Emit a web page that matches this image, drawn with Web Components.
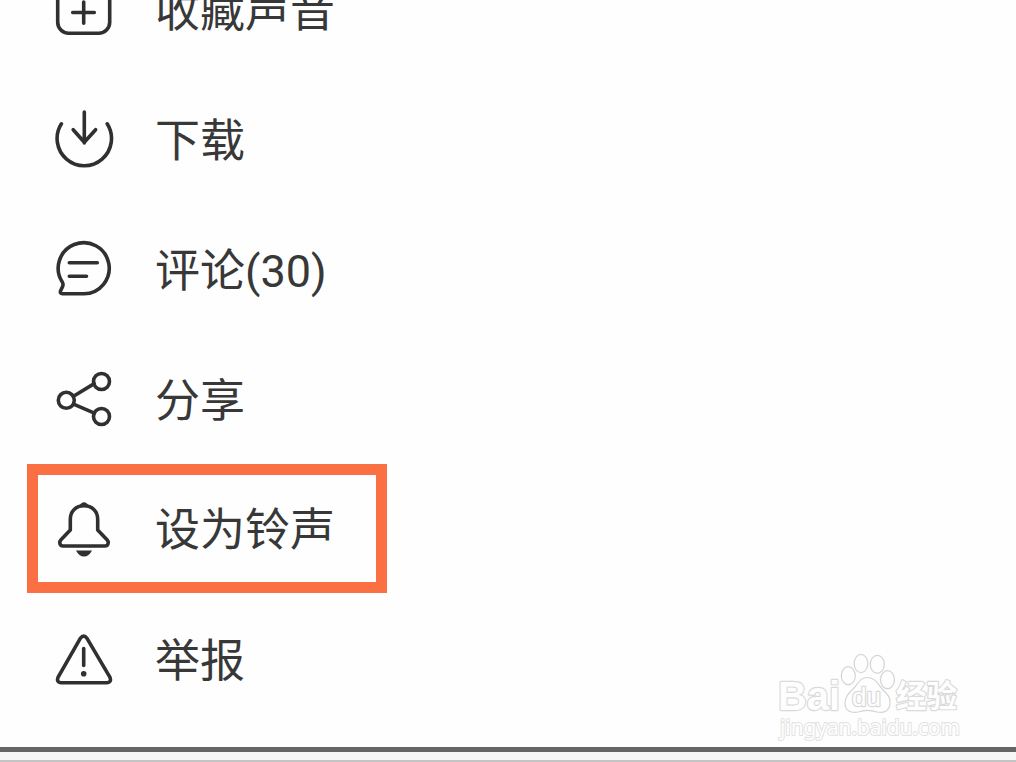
<!DOCTYPE html>
<html lang="zh-CN">
<head>
<meta charset="utf-8">
<title>声音菜单</title>
<style>
  body {
    margin: 0;
    background: #fefefe;
    overflow: hidden;
  }
</style>
</head>
<body>
<sound-menu>
  <menu-item icon="collect">收藏声音</menu-item>
  <menu-item icon="download">下载</menu-item>
  <menu-item icon="comment">评论(30)</menu-item>
  <menu-item icon="share">分享</menu-item>
  <menu-item icon="bell" marked>设为铃声</menu-item>
  <menu-item icon="report">举报</menu-item>
  <page-watermark slot="watermark"></page-watermark>
</sound-menu>

<script>
/**
 * Icon drawings, all on a 60 x 60 grid.
 */
const icons = {
  collect: `
    <rect x="3.7" y="3.5" width="52" height="50.7" rx="11"/>
    <path d="M18.7 33.5h21.6M29.7 23v21.2"/>`,
  download: `
    <path d="M7.4 14.8A27.2 27.2 0 1 0 53.2 14.8"/>
    <path d="M30.3 3v31M19.2 20.7l11.1 12.500 11.300-12.500"/>`,
  comment: `
    <path d="M30 54.700H8.4q-2.6 0-1.9-2.7l2.200-4.800q.8-2.2-.5-4.3A25.500 25.500 0 1 1 30 54.700z"/>
    <path d="M15.3 23.7h28M15.3 37.3h17.2"/>`,
  share: `
    <circle cx="12.3" cy="31.3" r="8"/>
    <circle cx="47.5" cy="12.5" r="8"/>
    <circle cx="47.5" cy="47.5" r="8"/>
    <path d="M19.5 27.2l20.7-12.6M19.5 35.2l20.900 9"/>`,
  bell: `
    <path d="M16.300 20.500C16.300 12 22 6.800 30 6.800S43.700 12 43.700 20.500V31L53 40.700C55.300 43.500 54 47 51 47H9C6 47 4.700 43.500 7 40.700L16.300 31z"/>
    <path class="solid" d="M24.500 7.500Q27.500 3.200 30 3.200T35.500 7.500zM22 51.500H38Q35 57.500 30 57.500T22 51.500z"/>`,
  report: `
    <path d="M26.300 9.300Q29.700 5 33 9.300L56 48.300Q57.800 53.400 53 53.700H7Q2.200 53.400 4 48.300z"/>
    <path d="M29.700 19.500v17"/>
    <circle class="solid" cx="29.700" cy="44.700" r="2.800"/>`
}

const itemTemplate = document.createElement('template')
itemTemplate.innerHTML = `
  <style>
    :host {
      display: flex;
      align-items: center;
      height: 130px;
      box-sizing: border-box;
      padding-left: 54px;
    }

    :host([marked]) {
      width: 360px;
      height: 129px;
      margin: 0 0 1px 27px;
      padding-left: 16px;
      border: 11px solid #fb7043;
    }

    svg {
      flex: none;
      width: 60px;
      height: 60px;
      margin-right: 41px;
      fill: none;
      stroke: #303030;
      stroke-width: 3.6;
      stroke-linecap: round;
      stroke-linejoin: round;
    }

    .solid {
      fill: #303030;
      stroke: none;
    }

    .label {
      padding-top: 5px;
      line-height: 60px;
      white-space: nowrap;
    }
  </style>
  <svg viewBox="0 0 60 60"></svg>
  <span class="label"><slot></slot></span>
`

/**
 * One row of the menu: an icon and its label.
 */
customElements.define('menu-item',
  class extends HTMLElement {
    constructor () {
      super()

      this.attachShadow({ mode: 'open' })
        .appendChild(itemTemplate.content.cloneNode(true))
    }

    connectedCallback () {
      this.shadowRoot.querySelector('svg').innerHTML = icons[this.getAttribute('icon')] || ''
    }
  }
)

const watermarkTemplate = document.createElement('template')
watermarkTemplate.innerHTML = `
  <style>
    :host {
      display: block;
      width: 190px;
      height: 94px;
    }

    svg {
      display: block;
      fill: #fefefe;
      stroke: #dadada;
      stroke-width: 2.4;
      stroke-linejoin: round;
    }

    text {
      font-family: "Liberation Sans", "Noto Sans CJK SC", sans-serif;
      paint-order: stroke;
    }

    .bold {
      font-weight: 700;
    }

    .url {
      font-family: "Noto Sans", sans-serif;
      stroke: #e2e2e2;
      stroke-width: 2;
    }

    .paw {
      stroke: #d4d4d4;
      stroke-width: 1.2;
    }
  </style>
  <svg width="190" height="94" viewBox="0 0 190 94">
    <text class="bold" x="3" y="60" font-size="41" textLength="62" lengthAdjust="spacingAndGlyphs">Bai</text>
    <g class="paw">
      <ellipse cx="73.300" cy="25.700" rx="7" ry="9"/>
      <ellipse cx="86" cy="13.500" rx="6.800" ry="9.200"/>
      <ellipse cx="102.300" cy="14.300" rx="7" ry="9"/>
      <ellipse cx="112.500" cy="29.700" rx="7" ry="9"/>
      <path d="M92.500 27.500C100 27.500 103 34 108 40C113 44 116 48 115 54C114 61 109 63.500 102 62C96 60 89 60 83 62C76 63.500 70 61 70 53C70 47 74 43 78 39C83 34 85 27.500 92.500 27.500z"/>
    </g>
    <text x="77" y="56" font-size="25" textLength="29" lengthAdjust="spacingAndGlyphs">du</text>
    <text class="bold" x="121" y="57" font-size="30.500" textLength="61" lengthAdjust="spacingAndGlyphs">经验</text>
    <text class="url" x="5" y="84.500" font-size="21" textLength="180" lengthAdjust="spacingAndGlyphs">jingyan.baidu.com</text>
  </svg>
`

/**
 * The site mark in the corner of the page.
 */
customElements.define('page-watermark',
  class extends HTMLElement {
    constructor () {
      super()

      this.attachShadow({ mode: 'open' })
        .appendChild(watermarkTemplate.content.cloneNode(true))
    }
  }
)

const menuTemplate = document.createElement('template')
menuTemplate.innerHTML = `
  <style>
    :host {
      display: flex;
      flex-direction: column;
      position: relative;
      height: 762px;
      overflow: hidden;
      color: #383838;
      font: 400 45px Roboto, "Noto Sans CJK SC", sans-serif;
    }

    .list {
      flex: 1;
      min-height: 0;
      margin-top: -56px;
    }

    .edge {
      height: 8px;
      border-top: 5px solid #666;
      border-bottom: 2px solid #c4c4c4;
      background: #f7f7f7;
    }

    ::slotted([slot="watermark"]) {
      position: absolute;
      right: 51px;
      bottom: 18px;
    }
  </style>
  <div class="list"><slot></slot></div>
  <div class="edge"></div>
  <slot name="watermark"></slot>
`

/**
 * The menu sheet, with its first row scrolled partly out of view.
 */
customElements.define('sound-menu',
  class extends HTMLElement {
    constructor () {
      super()

      this.attachShadow({ mode: 'open' })
        .appendChild(menuTemplate.content.cloneNode(true))
    }
  }
)
</script>
</body>
</html>
